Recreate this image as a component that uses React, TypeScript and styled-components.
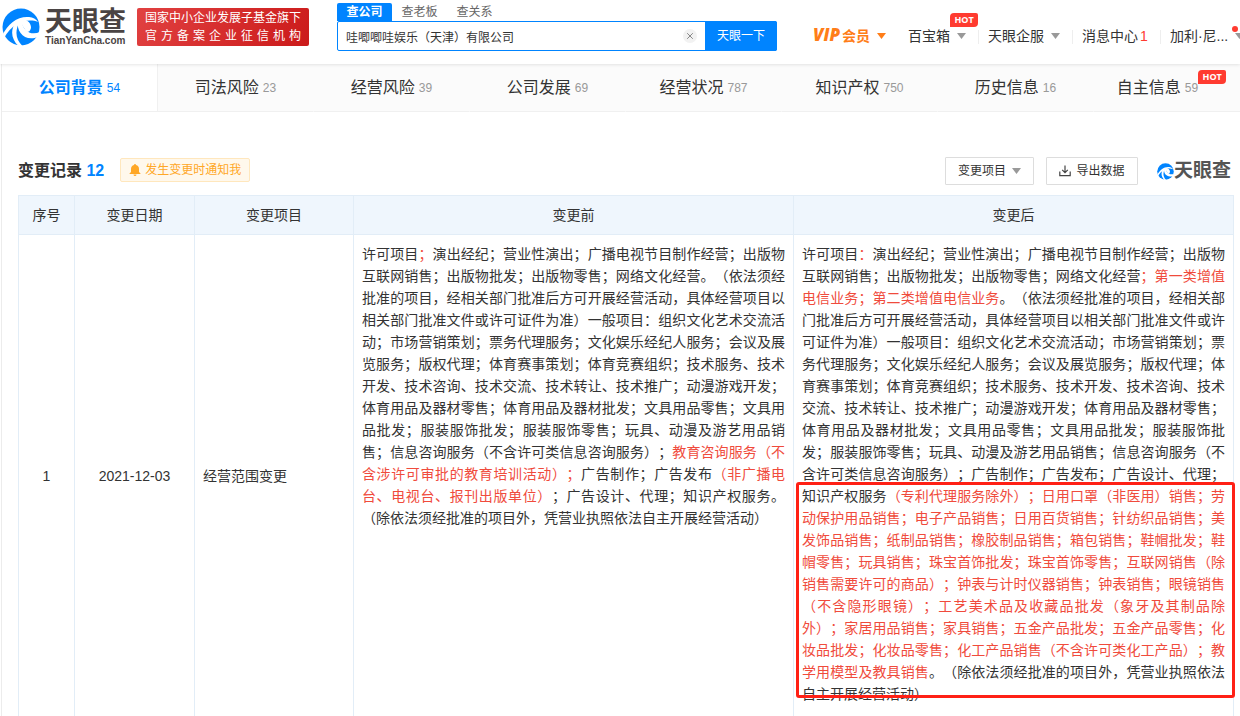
import React from "react";
import styled, { createGlobalStyle, css } from "styled-components";

const blue = "#0084ff";
const line = "#e2edf7";

const Global = createGlobalStyle`
  *, *::before, *::after { box-sizing: border-box; }
  body {
    margin: 0;
    background: #fff;
    color: #333;
    font: 14px/22px "Liberation Sans", "Noto Sans CJK SC", sans-serif;
    text-spacing-trim: space-all;
    overflow-x: hidden;
  }
  button, input, select { font: inherit; color: inherit; margin: 0; }
  a { color: inherit; text-decoration: none; }
`;

const Header = styled.header`
  position: relative;
  z-index: 1;
  display: flex;
  align-items: flex-start;
  height: 64px;
  padding-left: 2px;
  background: #fff;
  box-shadow: 0 0 4px rgba(0, 0, 0, 0.16);
  white-space: nowrap;
  & > * { flex-shrink: 0; }
`;

const Brand = styled.a`
  display: flex;
  gap: 5px;
  width: 135px;
  padding-top: 8px;
`;

const BrandText = styled.span`
  display: flex;
  flex-direction: column;
  color: #4a4444;
`;

const BrandName = styled.span`
  font-size: 27px;
  line-height: 28px;
  font-weight: 700;
`;

const BrandDomain = styled.span`
  font-size: 10px;
  line-height: 10px;
  font-weight: 700;
`;

const Credential = styled.div`
  width: 172px;
  height: 38px;
  margin-top: 8px;
  padding: 1px 8px;
  border-radius: 2px;
  background: linear-gradient(120deg, #e14141, #cb1a1a);
  color: #fff;
  font-size: 12px;
  line-height: 18px;
`;

const CredentialLine = styled.div`
  text-align: justify;
  text-align-last: justify;
`;

const Search = styled.form`
  width: 440px;
  margin: 3px 0 0 28px;
  font-size: 12px;
`;

const SearchTabs = styled.div`
  display: flex;
  height: 18px;
`;

const SearchTab = styled.button<{ $active?: boolean }>`
  width: 55px;
  padding: 0;
  border: 0;
  border-radius: 2px 2px 0 0;
  background: ${(p) => (p.$active ? blue : "none")};
  color: ${(p) => (p.$active ? "#fff" : "#666")};
  font-weight: ${(p) => (p.$active ? 700 : 400)};
  line-height: 18px;
`;

const SearchBar = styled.div`
  display: flex;
  align-items: center;
  height: 30px;
  border: 1px solid ${blue};
  border-radius: 2px;
`;

const SearchInput = styled.input`
  flex: 1;
  min-width: 0;
  height: 28px;
  padding: 0 8px;
  border: 0;
  outline: 0;
  background: none;
`;

const ClearButton = styled.button`
  display: flex;
  padding: 0;
  margin-right: 8px;
  border: 0;
  background: none;
`;

const SearchButton = styled.button`
  width: 72px;
  height: 30px;
  margin-right: -1px;
  padding: 0;
  border: 0;
  border-radius: 0 2px 2px 0;
  background: ${blue};
  color: #fff;
`;

const Nav = styled.nav`
  display: flex;
  align-items: center;
  margin-left: auto;
  padding: 24px 0 0 36px;
`;

const NavItem = styled.a<{ $vip?: boolean }>`
  position: relative;
  display: flex;
  align-items: center;
  gap: 7px;
  padding-right: 12px;
  color: #333;
  ${(p) =>
    p.$vip &&
    css`
      color: #ff7d18;
      font-weight: 700;
    `}
  & + & { padding-left: 10px; }
  & + &::before {
    content: "";
    position: absolute;
    left: 0;
    top: 5px;
    height: 14px;
    border-left: 1px solid #eee;
  }
`;

const VipMark = styled.i`
  margin-right: 2px;
  font: italic 800 17px/22px "Open Sans", sans-serif;
`;

const Unread = styled.b`
  margin-left: 2px;
  color: #ff3b30;
  font-weight: 400;
`;

const Dot = styled.i`
  position: absolute;
  left: 72px;
  top: 1px;
  width: 6px;
  height: 6px;
  border-radius: 50%;
  background: #ff3b30;
`;

const Hot = styled.span`
  width: 28px;
  height: 14px;
  border-radius: 4px 2px 4px 0;
  background: #ff3b30;
  color: #fff;
  font: 700 9px/14px "Open Sans", sans-serif;
  text-align: center;
`;

const NavHot = styled(Hot)`
  position: absolute;
  left: 52px;
  top: -12px;
`;

const Main = styled.main`
  margin-left: 1px;
  border-left: 1px solid #ececec;
`;

const Tabs = styled.nav`
  display: flex;
  height: 48px;
  overflow: hidden;
`;

const Tab = styled.a<{ $active?: boolean }>`
  flex: 1 0 156px;
  display: flex;
  justify-content: center;
  align-items: center;
  gap: 4px;
  border-right: 1px solid ${(p) => (p.$active ? "#f0f0f0" : "#fbfbfb")};
  border-bottom: 1px solid #f0f0f0;
  background: ${(p) => (p.$active ? "#fff" : "#fbfbfb")};
  color: ${(p) => (p.$active ? blue : "#333")};
  font-size: 16px;
  font-weight: ${(p) => (p.$active ? 700 : 400)};
  white-space: nowrap;
`;

const TabCount = styled.span<{ $active?: boolean }>`
  color: ${(p) => (p.$active ? blue : "#999")};
  font-size: 12px;
  font-weight: 400;
`;

const TabHot = styled(Hot)`
  align-self: flex-start;
  margin: 6px 0 0 -4px;
`;

const Section = styled.section`
  padding: 45px 6px 0 16px;
`;

const SectionHead = styled.div`
  display: flex;
  align-items: center;
  height: 28px;
  margin-bottom: 10px;
  font-size: 12px;
`;

const Title = styled.h2`
  margin: 0 16px 0 0;
  font-size: 16px;
  font-weight: 700;
  span { color: ${blue}; }
`;

const Notify = styled.button`
  display: flex;
  align-items: center;
  gap: 4px;
  height: 24px;
  margin: 0 auto 2px 0;
  padding: 0 8px;
  border: 1px solid #ffe7bd;
  border-radius: 2px;
  background: #fff8ec;
  color: #ffa726;
`;

const SelectWrap = styled.label`
  position: relative;
  svg {
    position: absolute;
    right: 13px;
    top: 11px;
    pointer-events: none;
  }
`;

const Select = styled.select`
  appearance: none;
  width: 89px;
  height: 28px;
  padding: 0 12px;
  border: 1px solid #ddd;
  border-radius: 1px;
  background: #fff;
`;

const Export = styled.button`
  display: flex;
  align-items: center;
  justify-content: center;
  gap: 5px;
  width: 92px;
  height: 28px;
  margin: 0 19px 0 12px;
  padding: 0;
  border: 1px solid #ddd;
  border-radius: 1px;
  background: #fff;
`;

const Watermark = styled.span`
  display: flex;
  align-items: center;
  margin-right: 3px;
  color: #555;
  font-size: 19px;
  font-weight: 700;
`;

const Table = styled.table`
  width: 100%;
  table-layout: fixed;
  border-collapse: collapse;
`;

const Th = styled.th<{ $w?: number }>`
  width: ${(p) => (p.$w ? `${p.$w}px` : "auto")};
  height: 39px;
  padding: 0;
  border: 1px solid ${line};
  background: #eff6fd;
  font-weight: 400;
`;

const Td = styled.td<{ $center?: boolean }>`
  position: relative;
  padding: 8px;
  border: 1px solid ${line};
  text-align: ${(p) => (p.$center ? "center" : "left")};
`;

const ScopeTd = styled(Td)`
  padding-bottom: 12px;
  text-align: justify;
  vertical-align: top;
`;

const Changed = styled.em`
  color: #f04b3c;
  font-style: normal;
`;

const Highlight = styled.div`
  position: absolute;
  left: 2px;
  right: -2px;
  top: 247px;
  height: 216px;
  border: 3px solid #ff2015;
  border-radius: 3px;
  pointer-events: none;
`;

const Swirl = ({ size }: { size: number }) => (
  <svg width={size} height={size} viewBox="0 0 38 38" aria-hidden="true">
    <circle cx="19" cy="19" r="18.500" fill={blue} />
    <g fill="#fff">
      <path d="M0 28C6 15 16 8 27 9C31 9.500 34 11 36 14C26 10 11 14 2 30z" />
      <path d="M14 14C8 22 9 31 17 38.500L21 38.500C14 32 12 24 18 13z" />
      <path d="M16 13C14 24 23 34 36 29L38 24C29 28 20 23 20 12z" />
      <path d="M20 11C26 12 29 15 29 20C28 23 27 24 25 24C22 21 20 17 18 12z" />
    </g>
  </svg>
);

const Caret = ({ color = "#999" }: { color?: string }) => (
  <svg width="9" height="6" viewBox="0 0 9 6" aria-hidden="true">
    <path d="M0 0h9L4.500 6z" fill={color} />
  </svg>
);

const Bell = () => (
  <svg width="12" height="12" viewBox="0 0 12 12" fill="#ffa726" aria-hidden="true">
    <path d="M6 0a1 1 0 0 1 1 1c2 .5 3 2 3 4v3l1.500 1.500v.5H.5v-.5L2 8V5c0-2 1-3.500 3-4a1 1 0 0 1 1-1zM4.500 10.500h3a1.500 1.500 0 0 1-3 0z" />
  </svg>
);

const Download = () => (
  <svg width="12" height="12" viewBox="0 0 12 12" fill="none" stroke="#444" strokeWidth="1.200" aria-hidden="true">
    <path d="M6 0.500v7M3.200 4.800L6 7.600l2.800-2.800M.8 6.500v4.200h10.400V6.500" />
  </svg>
);

const tabs = [
  { name: "公司背景", count: 54 },
  { name: "司法风险", count: 23 },
  { name: "经营风险", count: 39 },
  { name: "公司发展", count: 69 },
  { name: "经营状况", count: 787 },
  { name: "知识产权", count: 750 },
  { name: "历史信息", count: 16 },
  { name: "自主信息", count: 59, hot: true },
];

export default function App() {
  return (
    <>
      <Global />
      <Header>
        <Brand href="#" aria-label="天眼查">
          <Swirl size={38} />
          <BrandText>
            <BrandName>天眼查</BrandName>
            <BrandDomain>TianYanCha.com</BrandDomain>
          </BrandText>
        </Brand>
        <Credential>
          <CredentialLine>国家中小企业发展子基金旗下</CredentialLine>
          <CredentialLine>官 方 备 案 企 业 征 信 机 构</CredentialLine>
        </Credential>
        <Search onSubmit={(e) => e.preventDefault()}>
          <SearchTabs>
            <SearchTab type="button" $active>查公司</SearchTab>
            <SearchTab type="button">查老板</SearchTab>
            <SearchTab type="button">查关系</SearchTab>
          </SearchTabs>
          <SearchBar>
            <SearchInput aria-label="公司名称" defaultValue="哇唧唧哇娱乐（天津）有限公司" />
            <ClearButton type="button" aria-label="清空">
              <svg width="14" height="14" viewBox="0 0 14 14">
                <circle cx="7" cy="7" r="7" fill="#f2f2f2" />
                <path d="M4.200 4.200l5.600 5.600M9.800 4.200l-5.600 5.600" stroke="#888" />
              </svg>
            </ClearButton>
            <SearchButton type="submit">天眼一下</SearchButton>
          </SearchBar>
        </Search>
        <Nav>
          <NavItem href="#" $vip>
            <span><VipMark>VIP</VipMark>会员</span>
            <Caret color="#ff7d18" />
          </NavItem>
          <NavItem href="#">百宝箱<Caret /><NavHot>HOT</NavHot></NavItem>
          <NavItem href="#">天眼企服<Caret /></NavItem>
          <NavItem href="#"><span>消息中心<Unread>1</Unread></span></NavItem>
          <NavItem href="#">加利·尼...<Caret /><Dot /></NavItem>
        </Nav>
      </Header>
      <Main>
        <Tabs>
          {tabs.map((t, i) => (
            <Tab key={t.name} href="#" $active={i === 0}>
              {t.name}
              <TabCount $active={i === 0}>{t.count}</TabCount>
              {t.hot && <TabHot>HOT</TabHot>}
            </Tab>
          ))}
        </Tabs>
        <Section>
          <SectionHead>
            <Title>变更记录 <span>12</span></Title>
            <Notify type="button"><Bell />发生变更时通知我</Notify>
            <SelectWrap>
              <Select aria-label="变更项目"><option>变更项目</option></Select>
              <Caret />
            </SelectWrap>
            <Export type="button"><Download />导出数据</Export>
            <Watermark><Swirl size={17} />天眼查</Watermark>
          </SectionHead>
          <Table>
            <thead>
              <tr>
                <Th $w={56}>序号</Th>
                <Th $w={120}>变更日期</Th>
                <Th $w={159}>变更项目</Th>
                <Th>变更前</Th>
                <Th>变更后</Th>
              </tr>
            </thead>
            <tbody>
              <tr>
                <Td $center>1</Td>
                <Td $center>2021-12-03</Td>
                <Td>经营范围变更</Td>
                <ScopeTd>
                  许可项目<Changed>；</Changed>演出经纪；营业性演出；广播电视节目制作经营；出版物互联网销售；出版物批发；出版物零售；网络文化经营。（依法须经批准的项目，经相关部门批准后方可开展经营活动，具体经营项目以相关部门批准文件或许可证件为准）一般项目：组织文化艺术交流活动；市场营销策划；票务代理服务；文化娱乐经纪人服务；会议及展览服务；版权代理；体育赛事策划；体育竞赛组织；技术服务、技术开发、技术咨询、技术交流、技术转让、技术推广；动漫游戏开发；体育用品及器材零售；体育用品及器材批发；文具用品零售；文具用品批发；服装服饰批发；服装服饰零售；玩具、动漫及游艺用品销售；信息咨询服务（不含许可类信息咨询服务）；<Changed>教育咨询服务（不含涉许可审批的教育培训活动）；</Changed>广告制作；广告发布<Changed>（非广播电台、电视台、报刊出版单位）</Changed>；广告设计、代理；知识产权服务。（除依法须经批准的项目外，凭营业执照依法自主开展经营活动）
                </ScopeTd>
                <ScopeTd>
                  许可项目<Changed>：</Changed>演出经纪；营业性演出；广播电视节目制作经营；出版物互联网销售；出版物批发；出版物零售；网络文化经营<Changed>；第一类增值电信业务；第二类增值电信业务</Changed>。（依法须经批准的项目，经相关部门批准后方可开展经营活动，具体经营项目以相关部门批准文件或许可证件为准）一般项目：组织文化艺术交流活动；市场营销策划；票务代理服务；文化娱乐经纪人服务；会议及展览服务；版权代理；体育赛事策划；体育竞赛组织；技术服务、技术开发、技术咨询、技术交流、技术转让、技术推广；动漫游戏开发；体育用品及器材零售；体育用品及器材批发；文具用品零售；文具用品批发；服装服饰批发；服装服饰零售；玩具、动漫及游艺用品销售；信息咨询服务（不含许可类信息咨询服务）；广告制作；广告发布；广告设计、代理；知识产权服务<Changed>（专利代理服务除外）；日用口罩（非医用）销售；劳动保护用品销售；电子产品销售；日用百货销售；针纺织品销售；美发饰品销售；纸制品销售；橡胶制品销售；箱包销售；鞋帽批发；鞋帽零售；玩具销售；珠宝首饰批发；珠宝首饰零售；互联网销售（除销售需要许可的商品）；钟表与计时仪器销售；钟表销售；眼镜销售（不含隐形眼镜）；工艺美术品及收藏品批发（象牙及其制品除外）；家居用品销售；家具销售；五金产品批发；五金产品零售；化妆品批发；化妆品零售；化工产品销售（不含许可类化工产品）；教学用模型及教具销售</Changed>。（除依法须经批准的项目外，凭营业执照依法自主开展经营活动）
                  <Highlight />
                </ScopeTd>
              </tr>
            </tbody>
          </Table>
        </Section>
      </Main>
    </>
  );
}
